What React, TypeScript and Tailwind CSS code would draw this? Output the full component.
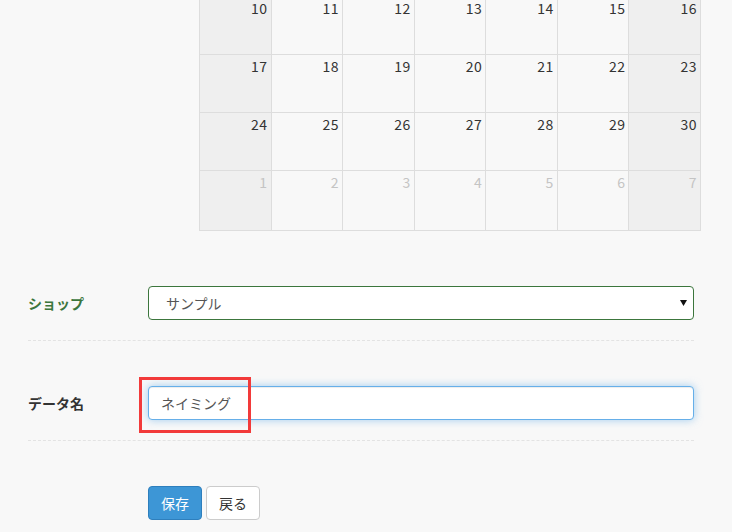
import React from "react";

export default function App() {
  // calendar weeks shown in the crop
  const weeks = [
    [10, 11, 12, 13, 14, 15, 16],
    [17, 18, 19, 20, 21, 22, 23],
    [24, 25, 26, 27, 28, 29, 30],
    [1, 2, 3, 4, 5, 6, 7],
  ];

  return (
    <div
      className="min-h-screen w-[732px] h-[532px] overflow-hidden bg-[#f8f8f8] text-[#333]"
      style={{ fontFamily: '"Noto Sans CJK JP", "Noto Sans", sans-serif' }}
    >
      {/* Calendar */}
      <div className="pl-[199px] -mt-[4px]">
        <div className="w-[502px] border-l border-t border-[#dddddd]">
          {weeks.map((week, wi) => (
            <div
              key={wi}
              className={`grid grid-cols-7 ${wi === 3 ? "h-[60px]" : "h-[58px]"}`}
            >
              {week.map((d, di) => {
                const weekend = di === 0 || di === 6;
                const other = wi === 3;
                return (
                  <div
                    key={di}
                    className={`border-r border-b border-[#dddddd] pr-[3px] pt-[1px] text-right text-[14px] leading-[20px] tracking-[0.5px] ${
                      weekend ? "bg-[#efefef]" : "bg-[#f8f8f8]"
                    } ${other ? "text-[#c4c4c4]" : "text-[#333]"}`}
                  >
                    {d}
                  </div>
                );
              })}
            </div>
          ))}
        </div>
      </div>

      {/* Form */}
      <div className="px-[28px] mr-[10px]">
        {/* Shop */}
        <div className="flex items-center pt-[55px] pb-[20px] border-b border-dashed border-[#e3e3e3]">
          <label className="w-[120px] text-[14px] font-bold text-[#3c763d]">
            ショップ
          </label>
          <div className="relative flex-1 h-[34px] rounded-[4px] border border-[#3c763d] bg-white flex items-center pl-[17px] text-[14px] text-[#555]">
            サンプル
            <svg
              className="absolute right-[6px] top-[13px]"
              width="7"
              height="6"
              viewBox="0 0 7 6"
            >
              <path d="M0 0h7L3.5 6z" fill="#111" />
            </svg>
          </div>
        </div>

        {/* Data name */}
        <div className="flex items-center pt-[45px] pb-[20px] border-b border-dashed border-[#e3e3e3]">
          <label className="w-[120px] text-[14px] font-bold text-[#333]">
            データ名
          </label>
          <div className="relative flex-1">
            <input
              readOnly
              value="ネイミング"
              className="w-full h-[34px] rounded-[4px] border border-[#66afe9] bg-white pl-[12px] text-[14px] text-[#555] outline-none shadow-[inset_0_1px_1px_rgba(0,0,0,0.075),0_0_8px_rgba(102,175,233,0.6)]"
            />
            <div className="absolute left-[-9px] top-[-9px] w-[112px] h-[56px] border-[3px] border-[#f23a3a] pointer-events-none" />
          </div>
        </div>

        {/* Buttons */}
        <div className="flex gap-[4px] pt-[45px] pl-[120px]">
          <button className="w-[54px] h-[34px] rounded-[4px] border border-[#2e7fbd] bg-[#3d96d6] text-white text-[14px]">
            保存
          </button>
          <button className="w-[54px] h-[34px] rounded-[4px] border border-[#cccccc] bg-white text-[#333] text-[14px]">
            戻る
          </button>
        </div>
      </div>
    </div>
  );
}
